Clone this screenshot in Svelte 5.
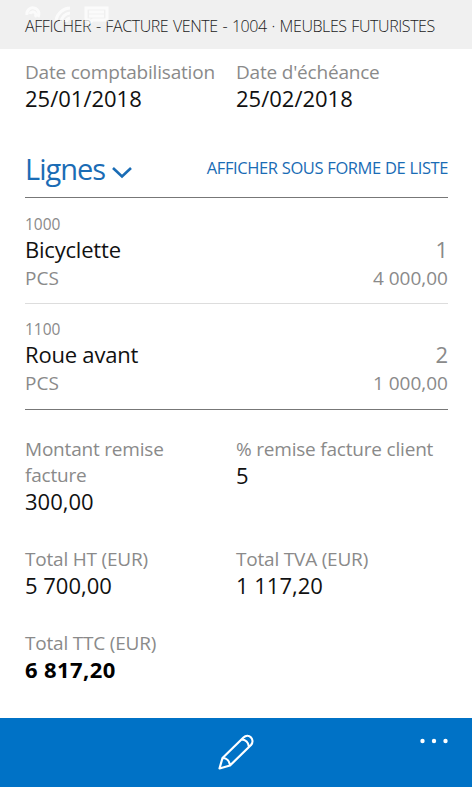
<script>
  const dates = [
    { label: "Date comptabilisation", value: "25/01/2018" },
    { label: "Date d'échéance", value: "25/02/2018" }
  ];

  const lines = [
    { no: "1000", name: "Bicyclette", unit: "PCS", quantity: "1", amount: "4 000,00" },
    { no: "1100", name: "Roue avant", unit: "PCS", quantity: "2", amount: "1 000,00" }
  ];

  const totals = [
    { label: "Montant remise facture", value: "300,00" },
    { label: "% remise facture client", value: "5" },
    { label: "Total HT (EUR)", value: "5 700,00" },
    { label: "Total TVA (EUR)", value: "1 117,20" },
    { label: "Total TTC (EUR)", value: "6 817,20", strong: true }
  ];
</script>

<div class="page">
  <header>
    <svg class="status" viewBox="0 0 90 22" width="90" height="22">
      <g fill="none" stroke="#fff" stroke-width="3">
        <path d="M3 13a6 6 0 1 1 11 2M6 12a3 3 0 1 1 5 3" />
        <path d="M32 18A15 15 0 0 1 46 6M37 20a10 10 0 0 1 9-9M42 20a5 5 0 0 1 4-4" />
        <path d="M62 6h21v12H69l-4 3v-3h-3zM65 10h15M65 14h15" />
      </g>
    </svg>
    <h1>AFFICHER - FACTURE VENTE - 1004 · MEUBLES FUTURISTES</h1>
  </header>

  <main>
    <div class="fields dates">
      {#each dates as field}
        <div>
          <div class="label">{field.label}</div>
          <div class="value">{field.value}</div>
        </div>
      {/each}
    </div>

    <div class="section">
      <h2>
        <span>Lignes</span>
        <svg viewBox="0 0 20 13" width="20" height="13">
          <path d="M1 2L10 10.500L19 2" fill="none" stroke="currentColor" stroke-width="2.600" />
        </svg>
      </h2>
      <span class="link">AFFICHER SOUS FORME DE LISTE</span>
    </div>

    <ul>
      {#each lines as line}
        <li>
          <div class="no">{line.no}</div>
          <div class="row name"><span>{line.name}</span><span class="quantity">{line.quantity}</span></div>
          <div class="row unit"><span>{line.unit}</span><span>{line.amount}</span></div>
        </li>
      {/each}
    </ul>

    <div class="fields totals">
      {#each totals as field}
        <div>
          <div class="label">{field.label}</div>
          <div class="value" class:strong={field.strong}>{field.value}</div>
        </div>
      {/each}
    </div>
  </main>

  <footer>
    <svg class="pencil" viewBox="0 0 36 36" width="36" height="36">
      <g fill="none" stroke="#fff" stroke-width="2.200" stroke-linejoin="round">
        <path d="M1.500 34.500L4.500 24L25.500 3.500c5-5 12 2 7.500 7.500L12 31.500zM4.500 24c4 0 7 3 7.500 7.500M23.500 5.500c4 0 7 3 7.500 7.500" />
      </g>
    </svg>
    <svg class="more" viewBox="0 0 28 6" width="28" height="6">
      <g fill="#fff">
        <circle cx="2.500" cy="3" r="2.200" />
        <circle cx="14" cy="3" r="2.200" />
        <circle cx="25.500" cy="3" r="2.200" />
      </g>
    </svg>
  </footer>
</div>

<style>
  :global(body) {
    margin: 0;
    background: #fff;
  }

  .page {
    display: flex;
    flex-direction: column;
    height: 787px;
    overflow: hidden;
    font-family: "Open Sans", "Noto Sans", sans-serif;
    color: #111;
  }

  header {
    position: relative;
    box-sizing: border-box;
    height: 49px;
    padding: 14px 25px 0;
    background: #f0f0f0;
  }

  .status {
    position: absolute;
    top: 2px;
    left: 24px;
    opacity: 0.75;
  }

  h1 {
    margin: 0;
    font-size: 16px;
    font-weight: 300;
    line-height: 24px;
    letter-spacing: -0.42px;
    word-spacing: 1px;
    white-space: nowrap;
    color: #222;
  }

  main {
    flex: 1;
    padding: 10px 24px 0 25px;
  }

  .fields {
    display: grid;
    grid-template-columns: 190px 1fr;
    column-gap: 21px;
    line-height: 26px;
  }

  .dates {
    white-space: nowrap;
  }

  .totals {
    row-gap: 32px;
    padding-top: 26px;
  }

  .label {
    font-size: 19px;
    letter-spacing: -0.2px;
    color: #8a8a8a;
  }

  .value {
    font-size: 22px;
  }

  .strong {
    font-weight: 700;
    letter-spacing: 0.4px;
    color: #000;
  }

  .section {
    display: flex;
    justify-content: space-between;
    box-sizing: border-box;
    height: 87px;
    padding-top: 39px;
    border-bottom: 1px solid #777;
    color: #1a6cb5;
  }

  h2 {
    display: flex;
    gap: 7px;
    align-items: center;
    margin: 0;
    font-size: 29px;
    font-weight: 400;
    line-height: 38px;
    letter-spacing: -1px;
    height: 38px;
  }

  h2 svg {
    margin-top: 6px;
  }

  .link {
    font-size: 16.5px;
    line-height: 36px;
    letter-spacing: -0.42px;
    word-spacing: 0.4px;
  }

  ul {
    list-style: none;
    margin: 0;
    padding: 0;
  }

  li {
    box-sizing: border-box;
    height: 106px;
    padding-top: 14px;
    border-bottom: 1px solid #ddd;
  }

  li:last-child {
    padding-top: 13px;
    border-color: #777;
  }

  .no {
    font-size: 15.5px;
    line-height: 24px;
    color: #8a8a8a;
  }

  .row {
    display: flex;
    justify-content: space-between;
    line-height: 28px;
  }

  .name {
    margin-bottom: 2px;
    font-size: 22px;
    line-height: 26px;
    letter-spacing: -0.2px;
  }

  .unit {
    font-size: 19px;
    color: #8a8a8a;
  }

  .quantity {
    color: #8a8a8a;
  }

  footer {
    position: relative;
    display: flex;
    justify-content: center;
    height: 69px;
    background: #0072c6;
  }

  .pencil {
    margin-top: 16px;
  }

  .more {
    position: absolute;
    top: 20px;
    right: 24px;
  }
</style>
